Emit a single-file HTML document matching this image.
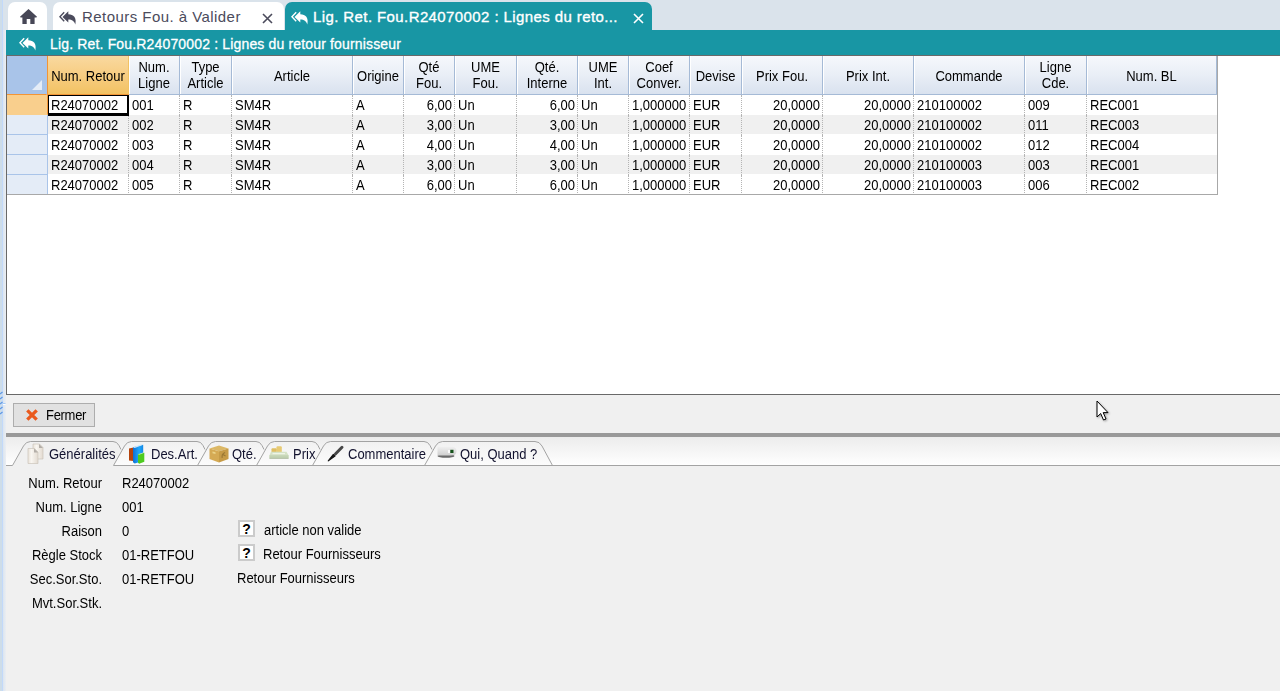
<!DOCTYPE html>
<html lang="fr">
<head>
<meta charset="utf-8">
<title>Lig. Ret. Fou.R24070002 : Lignes du retour fournisseur</title>
<style>
*{box-sizing:border-box;margin:0;padding:0}
html,body{width:1280px;height:691px;overflow:hidden}
body{background:#dae3eb;font-family:"Liberation Sans",sans-serif;font-size:13px;color:#000;position:relative}
.abs{position:absolute}
/* left window strip */
#lstrip{left:0;top:0;width:3px;height:691px;background:linear-gradient(to right,#cedde9 0,#cedde9 2px,#c2d9fa 2px)}
#lstrip2{left:3px;top:30px;width:3px;height:661px;background:linear-gradient(to right,#dbe5f0,#ebeef2)}
/* top tabs */
.ttab{position:absolute;top:2px;height:28px;background:#fff;border-radius:7px 7px 0 0;font-size:15px;letter-spacing:.45px;color:#4b4b5c;white-space:nowrap}
.ttab.act{background:#1896a4;color:#fff;letter-spacing:.4px;-webkit-text-stroke:.35px #fff}
.ttab .lbl{position:absolute;top:5px;line-height:20px}
.ttab svg{position:absolute}
#titlebar{left:6px;top:30px;width:1274px;height:26px;background:#1896a4;color:#fff;font-size:14px;letter-spacing:.16px;-webkit-text-stroke:.3px #fff;white-space:nowrap}
#titlebar .lbl{position:absolute;left:44px;top:6px;line-height:17px}
/* grid */
#grid{left:6px;top:55px;width:1290px;height:340px;background:#fff;border:1px solid #696969;overflow:hidden}
#ginner{position:absolute;left:0;top:0;width:1211px;height:139px;border-right:1px solid #a8a8a8;border-bottom:1px solid #a8a8a8;overflow:hidden}
.corner{position:absolute;left:0;top:0;width:40px;height:39px;background:#a9c4e9;border-right:1px solid #a9c4e9;border-bottom:1px solid #f29536}
.corner:after{content:"";position:absolute;right:4px;bottom:4px;border-style:solid;border-width:0 0 10px 10px;border-color:transparent transparent #e4ecf7 transparent}
.hc{position:absolute;top:0;height:39px;background:linear-gradient(#f6f8fc,#e9eef6 50%,#d9e2ef);border-right:1px solid #a5bad6;border-bottom:1px solid #a5bad6;box-shadow:inset 1px 0 0 #fff;display:flex;align-items:center;justify-content:center;text-align:center;line-height:14px;white-space:nowrap;padding-top:2px}
.hc.sel{background:linear-gradient(#f9d9a0,#f7cd82 50%,#f2c263);border-left:1px solid #f29536;border-right:1px solid #f2c263;border-bottom:1px solid #f29536;box-shadow:none}
.hc span,.t,.bt,.fl,.fv,#btn .lbl{display:inline-block;transform:scaleY(1.15);transform-origin:50% 55%}
.hc.one{padding-top:4px}
.row{position:absolute;left:0;width:1210px;height:20px;background:#fff;border-bottom:1px solid #fff}
.row.alt{background:#f0f0f0}
.rh{position:absolute;left:0;top:0;width:41px;height:20px;background:#e4ecf7;border-right:1px solid #a9c4e9;border-bottom:1px solid #a9c4e9}
.rh.cur{background:#f9cf8d;border-right-color:#f29536;border-bottom-color:#f9cf8d}
.c{position:absolute;top:0;height:20px;line-height:19px;padding:0 3px 0 3px;border-right:1px dotted #b4b4b4;white-space:nowrap;overflow:hidden}
.c.last{border-right:none}
.c.r{text-align:right;padding-right:2px}
.c.focus{border:1px solid #000;border-right:2px solid #000;border-bottom:3px solid #000;height:21px;line-height:17px;padding-left:2px;background:#fff;z-index:3}
/* lower */
#lower{left:6px;top:395px;width:1274px;height:296px;background:#f0f0f0}
#btn{left:13px;top:403px;width:82px;height:24px;background:#e1e1e1;border:1px solid #adadad}
#btn .lbl{position:absolute;left:32px;top:3px;line-height:15px;letter-spacing:-.3px}
#bar{left:6px;top:433px;width:1274px;height:4px;background:#999}
#tstrip{left:6px;top:437px;width:1274px;height:29px;background:linear-gradient(#ececec,#ffffff)}
.bt{position:absolute;top:446px;line-height:15px;color:#12122e;white-space:nowrap}
.fl{position:absolute;left:0;width:102px;text-align:right;line-height:15px;white-space:nowrap}
.fv{position:absolute;line-height:15px;white-space:nowrap}
.q{position:absolute;width:17px;height:17px;background:#fff;border:2px solid #cbcbcb;font-weight:bold;font-size:14px;line-height:14px;text-align:center}
</style>
</head>
<body>
<div class="abs" id="lstrip"></div>

<!-- top tabs -->
<div class="ttab" style="left:8px;width:39px">
<svg style="left:12.400px;top:6.700px" width="17" height="15" viewBox="0 0 17 15"><path d="M8.500 0 L0 7.700 L0.600 8.400 H2.400 V15 H6.700 V10 H10.300 V15 H14.600 V8.400 H16.400 L17 7.700 Z" fill="#474756"/></svg>
</div>
<div class="ttab" style="left:53px;width:230.500px">
<svg style="left:6px;top:8.9px" width="18" height="14" viewBox="0 0 18 14"><path d="M5.200 1.300 L0.900 5.800 L5.200 10.300" fill="none" stroke="#4b4b5c" stroke-width="1.400"/><path d="M9.300 0.200 V3.300 C14.600 3.400 17.800 6.400 16.300 13.600 C15.200 9.900 13.200 8.600 9.300 8.500 V11.600 L3.500 5.900 Z" fill="#4b4b5c"/></svg>
<span class="lbl" style="left:29px">Retours Fou. à Valider</span>
<svg style="left:209px;top:11px" width="11" height="11" viewBox="0 0 11 11"><path d="M1 1 L10 10 M10 1 L1 10" stroke="#4b4b5c" stroke-width="1.600" fill="none"/></svg>
</div>
<div class="ttab act" style="left:285px;width:367px">
<svg style="left:5.6px;top:8.9px" width="18" height="14" viewBox="0 0 18 14"><path d="M5.200 1.300 L0.900 5.800 L5.200 10.300" fill="none" stroke="#fff" stroke-width="1.400"/><path d="M9.300 0.200 V3.300 C14.600 3.400 17.800 6.400 16.300 13.600 C15.200 9.900 13.200 8.600 9.300 8.500 V11.600 L3.500 5.900 Z" fill="#fff"/></svg>
<span class="lbl" style="left:28px">Lig. Ret. Fou.R24070002 : Lignes du reto...</span>
<svg style="left:347.500px;top:11px" width="11" height="11" viewBox="0 0 11 11"><path d="M1 1 L10 10 M10 1 L1 10" stroke="#fff" stroke-width="1.600" fill="none"/></svg>
</div>

<div class="abs" id="titlebar">
<svg class="abs" style="left:13.3px;top:7.4px" width="18" height="14" viewBox="0 0 18 14"><path d="M5.200 1.300 L0.900 5.800 L5.200 10.300" fill="none" stroke="#fff" stroke-width="1.400"/><path d="M9.300 0.200 V3.300 C14.600 3.400 17.800 6.400 16.300 13.600 C15.200 9.900 13.200 8.600 9.300 8.500 V11.600 L3.500 5.900 Z" fill="#fff"/></svg>
<span class="lbl">Lig. Ret. Fou.R24070002 : Lignes du retour fournisseur</span>
</div>

<!-- grid -->
<div class="abs" id="grid">
<div id="ginner">
<div class="corner"></div>
<div class="hc sel one" style="left:40px;width:82px"><span>Num. Retour</span></div>
<div class="hc" style="left:122px;width:51px"><span>Num.<br>Ligne</span></div>
<div class="hc" style="left:173px;width:52px"><span>Type<br>Article</span></div>
<div class="hc one" style="left:225px;width:121px"><span>Article</span></div>
<div class="hc one" style="left:346px;width:51px"><span>Origine</span></div>
<div class="hc" style="left:397px;width:51px"><span>Qté<br>Fou.</span></div>
<div class="hc" style="left:448px;width:62px"><span>UME<br>Fou.</span></div>
<div class="hc" style="left:510px;width:61px"><span>Qté.<br>Interne</span></div>
<div class="hc" style="left:571px;width:51px"><span>UME<br>Int.</span></div>
<div class="hc" style="left:622px;width:61px"><span>Coef<br>Conver.</span></div>
<div class="hc one" style="left:683px;width:52px"><span>Devise</span></div>
<div class="hc one" style="left:735px;width:81px"><span>Prix Fou.</span></div>
<div class="hc one" style="left:816px;width:91px"><span>Prix Int.</span></div>
<div class="hc one" style="left:907px;width:111px"><span>Commande</span></div>
<div class="hc" style="left:1018px;width:62px"><span>Ligne<br>Cde.</span></div>
<div class="hc one" style="left:1080px;width:130px"><span>Num. BL</span></div>
<div class="row" style="top:39px">
<div class="rh cur"></div>
<div class="c l focus" style="left:41px;width:81px"><span class="t">R24070002</span></div>
<div class="c l" style="left:122px;width:51px"><span class="t">001</span></div>
<div class="c l" style="left:173px;width:52px"><span class="t">R</span></div>
<div class="c l" style="left:225px;width:121px"><span class="t">SM4R</span></div>
<div class="c l" style="left:346px;width:51px"><span class="t">A</span></div>
<div class="c r" style="left:397px;width:51px"><span class="t">6,00</span></div>
<div class="c l" style="left:448px;width:62px"><span class="t">Un</span></div>
<div class="c r" style="left:510px;width:61px"><span class="t">6,00</span></div>
<div class="c l" style="left:571px;width:51px"><span class="t">Un</span></div>
<div class="c l" style="left:622px;width:61px"><span class="t">1,000000</span></div>
<div class="c l" style="left:683px;width:52px"><span class="t">EUR</span></div>
<div class="c r" style="left:735px;width:81px"><span class="t">20,0000</span></div>
<div class="c r" style="left:816px;width:91px"><span class="t">20,0000</span></div>
<div class="c l" style="left:907px;width:111px"><span class="t">210100002</span></div>
<div class="c l" style="left:1018px;width:62px"><span class="t">009</span></div>
<div class="c l last" style="left:1080px;width:130px"><span class="t">REC001</span></div>
</div>
<div class="row alt" style="top:59px">
<div class="rh"></div>
<div class="c l" style="left:41px;width:81px"><span class="t">R24070002</span></div>
<div class="c l" style="left:122px;width:51px"><span class="t">002</span></div>
<div class="c l" style="left:173px;width:52px"><span class="t">R</span></div>
<div class="c l" style="left:225px;width:121px"><span class="t">SM4R</span></div>
<div class="c l" style="left:346px;width:51px"><span class="t">A</span></div>
<div class="c r" style="left:397px;width:51px"><span class="t">3,00</span></div>
<div class="c l" style="left:448px;width:62px"><span class="t">Un</span></div>
<div class="c r" style="left:510px;width:61px"><span class="t">3,00</span></div>
<div class="c l" style="left:571px;width:51px"><span class="t">Un</span></div>
<div class="c l" style="left:622px;width:61px"><span class="t">1,000000</span></div>
<div class="c l" style="left:683px;width:52px"><span class="t">EUR</span></div>
<div class="c r" style="left:735px;width:81px"><span class="t">20,0000</span></div>
<div class="c r" style="left:816px;width:91px"><span class="t">20,0000</span></div>
<div class="c l" style="left:907px;width:111px"><span class="t">210100002</span></div>
<div class="c l" style="left:1018px;width:62px"><span class="t">011</span></div>
<div class="c l last" style="left:1080px;width:130px"><span class="t">REC003</span></div>
</div>
<div class="row" style="top:79px">
<div class="rh"></div>
<div class="c l" style="left:41px;width:81px"><span class="t">R24070002</span></div>
<div class="c l" style="left:122px;width:51px"><span class="t">003</span></div>
<div class="c l" style="left:173px;width:52px"><span class="t">R</span></div>
<div class="c l" style="left:225px;width:121px"><span class="t">SM4R</span></div>
<div class="c l" style="left:346px;width:51px"><span class="t">A</span></div>
<div class="c r" style="left:397px;width:51px"><span class="t">4,00</span></div>
<div class="c l" style="left:448px;width:62px"><span class="t">Un</span></div>
<div class="c r" style="left:510px;width:61px"><span class="t">4,00</span></div>
<div class="c l" style="left:571px;width:51px"><span class="t">Un</span></div>
<div class="c l" style="left:622px;width:61px"><span class="t">1,000000</span></div>
<div class="c l" style="left:683px;width:52px"><span class="t">EUR</span></div>
<div class="c r" style="left:735px;width:81px"><span class="t">20,0000</span></div>
<div class="c r" style="left:816px;width:91px"><span class="t">20,0000</span></div>
<div class="c l" style="left:907px;width:111px"><span class="t">210100002</span></div>
<div class="c l" style="left:1018px;width:62px"><span class="t">012</span></div>
<div class="c l last" style="left:1080px;width:130px"><span class="t">REC004</span></div>
</div>
<div class="row alt" style="top:99px">
<div class="rh"></div>
<div class="c l" style="left:41px;width:81px"><span class="t">R24070002</span></div>
<div class="c l" style="left:122px;width:51px"><span class="t">004</span></div>
<div class="c l" style="left:173px;width:52px"><span class="t">R</span></div>
<div class="c l" style="left:225px;width:121px"><span class="t">SM4R</span></div>
<div class="c l" style="left:346px;width:51px"><span class="t">A</span></div>
<div class="c r" style="left:397px;width:51px"><span class="t">3,00</span></div>
<div class="c l" style="left:448px;width:62px"><span class="t">Un</span></div>
<div class="c r" style="left:510px;width:61px"><span class="t">3,00</span></div>
<div class="c l" style="left:571px;width:51px"><span class="t">Un</span></div>
<div class="c l" style="left:622px;width:61px"><span class="t">1,000000</span></div>
<div class="c l" style="left:683px;width:52px"><span class="t">EUR</span></div>
<div class="c r" style="left:735px;width:81px"><span class="t">20,0000</span></div>
<div class="c r" style="left:816px;width:91px"><span class="t">20,0000</span></div>
<div class="c l" style="left:907px;width:111px"><span class="t">210100003</span></div>
<div class="c l" style="left:1018px;width:62px"><span class="t">003</span></div>
<div class="c l last" style="left:1080px;width:130px"><span class="t">REC001</span></div>
</div>
<div class="row" style="top:119px">
<div class="rh"></div>
<div class="c l" style="left:41px;width:81px"><span class="t">R24070002</span></div>
<div class="c l" style="left:122px;width:51px"><span class="t">005</span></div>
<div class="c l" style="left:173px;width:52px"><span class="t">R</span></div>
<div class="c l" style="left:225px;width:121px"><span class="t">SM4R</span></div>
<div class="c l" style="left:346px;width:51px"><span class="t">A</span></div>
<div class="c r" style="left:397px;width:51px"><span class="t">6,00</span></div>
<div class="c l" style="left:448px;width:62px"><span class="t">Un</span></div>
<div class="c r" style="left:510px;width:61px"><span class="t">6,00</span></div>
<div class="c l" style="left:571px;width:51px"><span class="t">Un</span></div>
<div class="c l" style="left:622px;width:61px"><span class="t">1,000000</span></div>
<div class="c l" style="left:683px;width:52px"><span class="t">EUR</span></div>
<div class="c r" style="left:735px;width:81px"><span class="t">20,0000</span></div>
<div class="c r" style="left:816px;width:91px"><span class="t">20,0000</span></div>
<div class="c l" style="left:907px;width:111px"><span class="t">210100003</span></div>
<div class="c l" style="left:1018px;width:62px"><span class="t">006</span></div>
<div class="c l last" style="left:1080px;width:130px"><span class="t">REC002</span></div>
</div>
</div>
</div>

<!-- lower panel -->
<div class="abs" id="lower"></div>
<div class="abs" id="lstrip2"></div>
<div class="abs" id="btn">
<svg class="abs" style="left:11px;top:4px" width="14" height="14" viewBox="0 0 14 14"><path d="M2.300 2.300 L11.700 11.700 M11.700 2.300 L2.300 11.700" stroke="#ea5a1e" stroke-width="3.300" fill="none"/></svg>
<span class="lbl">Fermer</span>
</div>
<div class="abs" id="bar"></div>
<div class="abs" id="tstrip"></div>
<svg class="abs" style="left:0;top:437px" width="1280" height="30" viewBox="0 437 1280 30">
<defs><linearGradient id="tg" x1="0" y1="0" x2="0" y2="1"><stop offset="0" stop-color="#f1f1f1"/><stop offset="1" stop-color="#fcfcfc"/></linearGradient></defs>
<g fill="none" stroke="#a3a3a3" stroke-width="1">
<path d="M12.5 466.600 L23.5 446 Q26 441.500 30.5 441.500 H113 Q117 441.500 119 445.500 L121 449.500 L113.5 466.600 Z" fill="#f0f0f0" stroke="none"/><path d="M12.5 465.500 L23.5 446 Q26 441.500 30.5 441.500 H113 Q117 441.500 119 445.500 L121 449.500"/>
<path d="M113.5 465.500 L124.5 446 Q127 441.500 131.5 441.500 H197 Q201 441.500 203 445.500 L205 449.500 L197.5 465.500 Z" fill="url(#tg)" stroke="none"/><path d="M113.5 465.500 L124.5 446 Q127 441.500 131.5 441.500 H197 Q201 441.500 203 445.500 L205 449.500"/>
<path d="M197.5 465.500 L208.5 446 Q211 441.500 215.5 441.500 H256 Q260 441.500 262 445.500 L264 449.500 L256.5 465.500 Z" fill="url(#tg)" stroke="none"/><path d="M197.5 465.500 L208.5 446 Q211 441.500 215.5 441.500 H256 Q260 441.500 262 445.500 L264 449.500"/>
<path d="M256.5 465.500 L267.5 446 Q270 441.500 274.5 441.500 H312 Q316 441.500 318 445.500 L320 449.500 L312.5 465.500 Z" fill="url(#tg)" stroke="none"/><path d="M256.5 465.500 L267.5 446 Q270 441.500 274.5 441.500 H312 Q316 441.500 318 445.500 L320 449.500"/>
<path d="M312.5 465.500 L323.5 446 Q326 441.500 330.5 441.500 H424 Q428 441.500 430 445.500 L432 449.500 L424.5 465.500 Z" fill="url(#tg)" stroke="none"/><path d="M312.5 465.500 L323.5 446 Q326 441.500 330.5 441.500 H424 Q428 441.500 430 445.500 L432 449.500"/>
<path d="M424.5 465.500 L435.5 446 Q438 441.500 442.5 441.500 H535 Q539.500 441.500 542 446 L552.500 465.500 Z" fill="url(#tg)" stroke="none"/><path d="M424.5 465.500 L435.5 446 Q438 441.500 442.5 441.500 H535 Q539.500 441.500 542 446 L552.500 465.500"/>
<path d="M113.500 465.500 H1280"/>
<path d="M6 465.500 H12.500"/>
</g>
</svg>

<!-- bottom tab icons -->
<svg class="abs" style="left:27px;top:443px" width="18" height="21" viewBox="0 0 18 21"><defs><linearGradient id="pg" x1="0" y1="0" x2="1" y2="0"><stop offset="0" stop-color="#e9e2d9"/><stop offset=".35" stop-color="#f9f6f1"/><stop offset="1" stop-color="#e2dad0"/></linearGradient></defs><path d="M6 1 H12.500 L16 4.500 V16 H6 Z" fill="url(#pg)" stroke="#cbc4ba" stroke-width=".700"/><path d="M12 1 L16 5 H12 Z" fill="#b3aea8"/><path d="M1 5.500 H7.500 L11 9 V20.500 H1 Z" fill="url(#pg)" stroke="#cbc4ba" stroke-width=".700"/><path d="M7 5.500 L11 9.500 H7 Z" fill="#b3aea8"/></svg>
<svg class="abs" style="left:128px;top:444px" width="17" height="20" viewBox="0 0 17 20"><defs><linearGradient id="bl" x1="0" y1="0" x2="1" y2="0"><stop offset="0" stop-color="#0e6fd2"/><stop offset=".6" stop-color="#1fa8fb"/><stop offset="1" stop-color="#1487e4"/></linearGradient></defs><path d="M1 4.500 L5.500 3.500 V17 L1 16.500 Z" fill="#b5440e"/><path d="M5 3.200 L15.200 0.800 V17 L6.700 19.500 L5 18.300 Z" fill="url(#bl)"/><path d="M5 3.200 L13.300 0.300 L15.200 0.800 L6.700 3.900 Z" fill="#cfe6fb"/><path d="M10 10.300 L16.300 8.700 V17.800 L11.200 19.700 L10 18.800 Z" fill="#4dcb1f"/><path d="M10 10.300 L15 8.400 L16.300 8.700 L11.200 10.800 Z" fill="#c9f2b5"/></svg>
<svg class="abs" style="left:209px;top:445px" width="20" height="18" viewBox="0 0 20 18"><path d="M0.500 3.500 L10 0.500 L19.500 3.500 L10 6.200 Z" fill="#dcb866"/><path d="M0.500 3.500 L10 6.200 V17.500 L0.500 14 Z" fill="#d5aa54"/><path d="M10 6.200 L19.500 3.500 V14 L10 17.500 Z" fill="#c69b47"/><path d="M3.500 6.500 L6.500 7.300 V9 L3.500 8.200 Z" fill="#ecd489"/><path d="M16 7.500 Q12.500 9 13.200 12.800 M14 9.500 L16.500 11" stroke="#8c6c2d" stroke-width="1.200" fill="none" opacity=".75"/></svg>
<svg class="abs" style="left:269px;top:446px" width="20" height="13" viewBox="0 0 20 13"><rect x="2.500" y="2.300" width="5.300" height="4.500" rx="1" fill="#dfbe62"/><rect x="7.500" y="0.200" width="5.300" height="6.500" rx="1" fill="#e7ca73"/><path d="M2 5.800 H17.500 L19.500 9.300 V12.500 H0.500 V9.300 Z" fill="#d5e2c6"/><path d="M0.500 9.300 H19.500 V12.500 H0.500 Z" fill="#c3d3b3"/><path d="M3.500 7.600 H16" stroke="#eef4e6" stroke-width="1.200"/><path d="M0.500 12.300 H19.500" stroke="#a9b5a0" stroke-width=".8"/></svg>
<svg class="abs" style="left:327px;top:445px" width="18" height="17" viewBox="0 0 18 17"><path d="M1.300 15.800 L6.200 9.500 L8 11 Z" fill="#161616" stroke="#161616" stroke-width="1.200" stroke-linejoin="round"/><path d="M8.400 9 L15 2.300" stroke="#474747" stroke-width="3" stroke-linecap="round" fill="none"/></svg>
<svg class="abs" style="left:437px;top:446px" width="20" height="12" viewBox="0 0 20 12"><defs><linearGradient id="cd" x1="0" y1="0" x2="0" y2="1"><stop offset="0" stop-color="#f1f1f1"/><stop offset="1" stop-color="#cfcfcf"/></linearGradient></defs><ellipse cx="9" cy="10" rx="8.500" ry="1.700" fill="#6a6a6a"/><path d="M0.500 0.500 H14 Q19.500 0.500 19.500 5 Q19.500 9.500 14 9.500 H0.500 Z" fill="url(#cd)"/><rect x="11" y="4" width="2" height="3" fill="#fafafa"/><rect x="13.300" y="3.800" width="3.200" height="3.200" fill="#15521b"/></svg>

<span class="bt" style="left:49px">Généralités</span>
<span class="bt" style="left:151px">Des.Art.</span>
<span class="bt" style="left:232px">Qté.</span>
<span class="bt" style="left:293px">Prix</span>
<span class="bt" style="left:348px">Commentaire</span>
<span class="bt" style="left:460px">Qui, Quand ?</span>

<!-- form -->
<div class="fl" style="top:475px">Num. Retour</div><div class="fv" style="left:122px;top:475px">R24070002</div>
<div class="fl" style="top:499px">Num. Ligne</div><div class="fv" style="left:122px;top:499px">001</div>
<div class="fl" style="top:523px">Raison</div><div class="fv" style="left:122px;top:523px">0</div>
<div class="fl" style="top:547px">Règle Stock</div><div class="fv" style="left:122px;top:547px">01-RETFOU</div>
<div class="fl" style="top:571px">Sec.Sor.Sto.</div><div class="fv" style="left:122px;top:571px">01-RETFOU</div>
<div class="fl" style="top:595px">Mvt.Sor.Stk.</div>
<div class="q" style="left:238px;top:520px">?</div><div class="fv" style="left:264px;top:522px">article non valide</div>
<div class="q" style="left:238px;top:544px">?</div><div class="fv" style="left:263px;top:546px">Retour Fournisseurs</div>
<div class="fv" style="left:237px;top:570px">Retour Fournisseurs</div>

<svg class="abs" style="left:0;top:390px" width="6" height="28" viewBox="0 0 6 28"><g stroke="#5c97e6" stroke-width="1.300"><path d="M0 4 L2.500 2"/><path d="M0 9 L2.500 7"/><path d="M0 14 L2.500 12"/><path d="M0 19 L2.500 17"/><path d="M0 24 L2.500 22"/></g><path d="M2.500 13.500 H5.500" stroke="#a9ccf7"/><path d="M3 14.500 H5.500" stroke="#fff"/></svg>
<!-- mouse cursor -->
<svg class="abs" style="left:1096px;top:400px;filter:drop-shadow(1px 1px 1px rgba(0,0,0,.35))" width="14" height="21" viewBox="0 0 14 21"><path d="M1 1 V17 L4.700 13.500 L7.500 20 L10 19 L7.200 12.600 H12 Z" fill="#fff" stroke="#000" stroke-width="1"/></svg>
</body>
</html>
